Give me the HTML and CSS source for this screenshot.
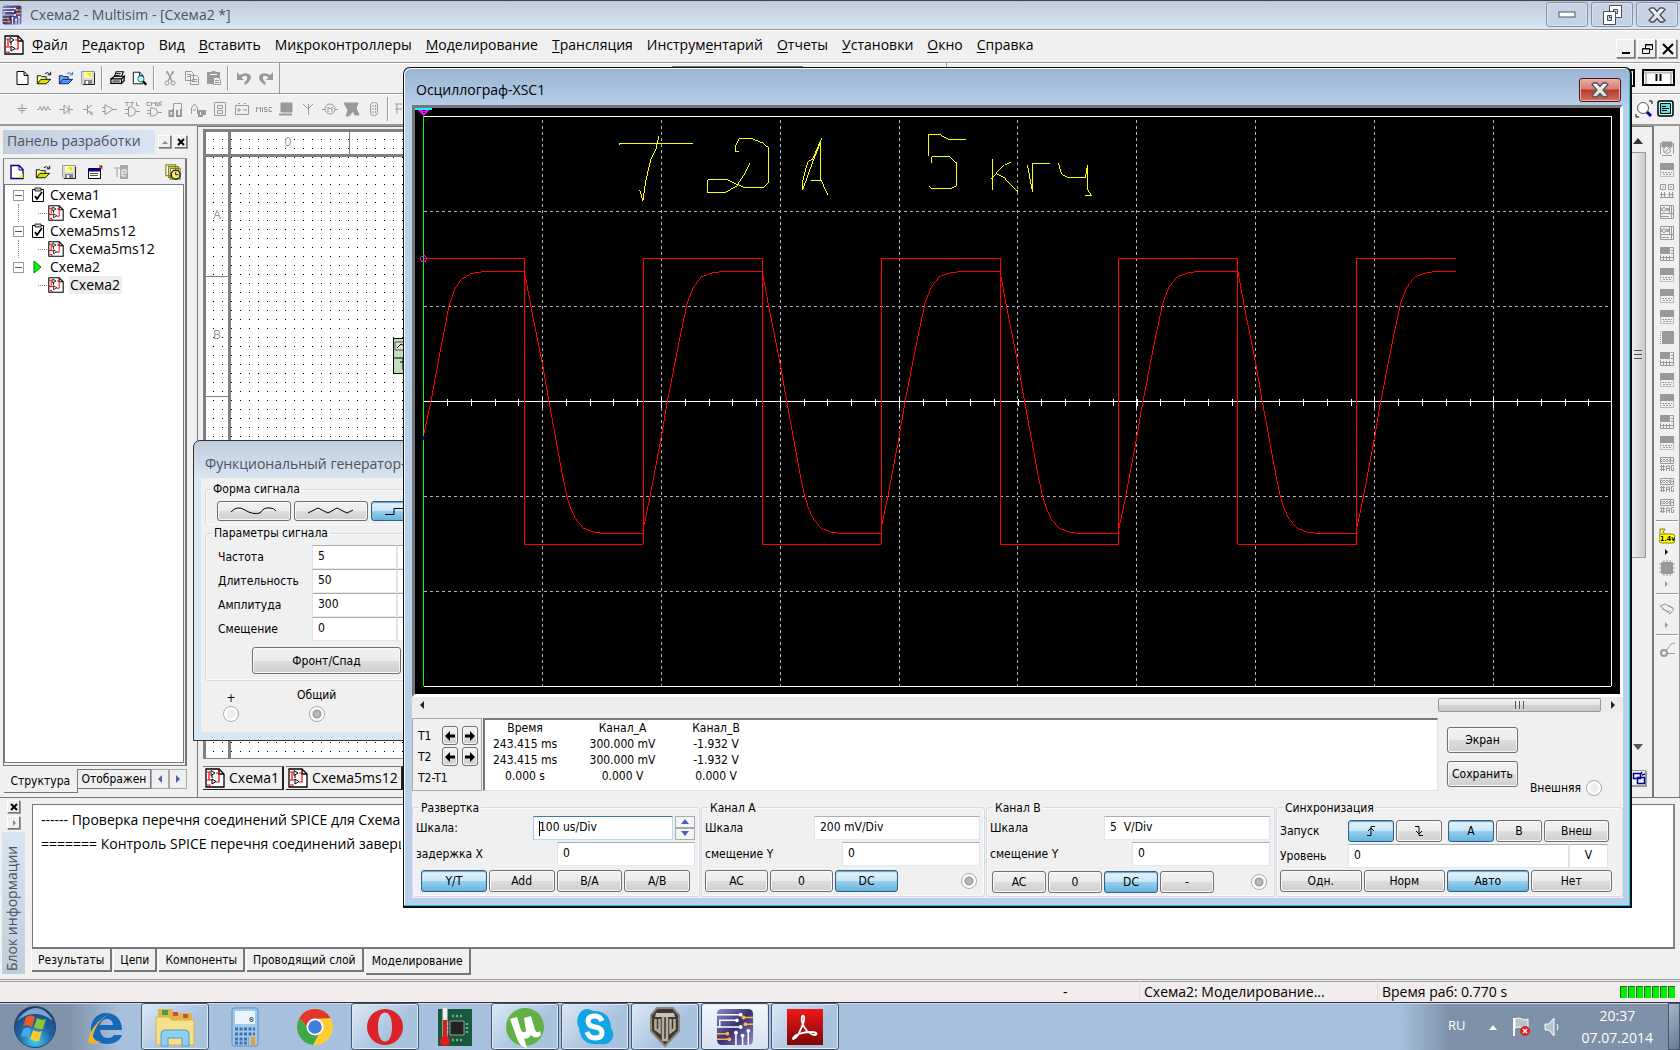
FILE: index.html
```html
<!DOCTYPE html>
<html lang="ru">
<head>
<meta charset="utf-8">
<title>Схема2 - Multisim - [Схема2 *]</title>
<link rel="stylesheet" href="styles.css">
</head>
<body>
<svg class="defs" aria-hidden="true">
  <defs>
    <linearGradient id="g-page" x1="0" y1="0" x2="1" y2="1"><stop offset="0" stop-color="#8d8bc8"/><stop offset=".5" stop-color="#3b2f78"/><stop offset="1" stop-color="#8d8bc8"/></linearGradient>
    <linearGradient id="g-x" x1="0" y1="0" x2="0" y2="1"><stop offset="0" stop-color="#fff"/><stop offset="1" stop-color="#d4d4d4"/></linearGradient>
  </defs>
  <symbol id="i-sch" viewBox="0 0 20 20"><path d="M1 1h13l5 5v13H1z" fill="#fff" stroke="#000" stroke-width="1.300"/><path d="M14 1v5h5" fill="none" stroke="#000" stroke-width="1.300"/><path d="M1 4h4M4 4v8M1 12h6M11 5h3v9h-3M2 17h3v2" fill="none" stroke="#e00" stroke-width="1.200"/><path d="M6 2.500v5l4-2.500zM7 11v5l4-2.500zM7 7v3" fill="#fff" stroke="#000"/></symbol>
  <symbol id="i-app" viewBox="0 0 40 40"><rect x="1" y="1" width="38" height="38" rx="5" fill="url(#g-page)"/><path d="M1 7h25M4 20v-7h18M1 20h25" fill="none" stroke="#fff" stroke-width="1.600"/><path d="M39 10H29M39 17H31M1 27h11M1 33h13" stroke="#ffb732" stroke-width="1.600"/><path d="M21 39V26M28 39V29M34 39V24" stroke="#fff" stroke-width="1.600"/><g fill="#fff"><circle cx="26" cy="7" r="2"/><circle cx="22" cy="13" r="2"/><circle cx="26" cy="20" r="2"/><circle cx="21" cy="26" r="2"/><circle cx="28" cy="29" r="2"/><circle cx="34" cy="24" r="2"/></g><g fill="#ffb732"><circle cx="29" cy="10" r="2"/><circle cx="31" cy="17" r="2"/><circle cx="12" cy="27" r="2"/><circle cx="14" cy="33" r="2"/></g></symbol>
  <symbol id="i-x" viewBox="0 0 18 16"><path d="M1 2.500 3 1h3l3 3.500L12 1h3l2 1.500L12 8l5 5.500-2 1.500h-3l-3-3.500L6 15H3l-2-1.500L6 8z" fill="url(#g-x)" stroke="#4b4f63" stroke-width="1.300"/></symbol>
  <symbol id="i-new" viewBox="0 0 16 16"><path d="M3 1.500h7l4 4v9H3zM10 1.500v4h4" fill="#fff" stroke="#000"/></symbol>
  <symbol id="i-newy" viewBox="0 0 16 16"><path d="M2 1.500h8l4 4v9H2z" fill="#fff" stroke="#008" stroke-width="1.400"/><path d="M9 14l5-5v5z" fill="#ee0"/><path d="M10 2v4h4" fill="none" stroke="#008"/></symbol>
  <symbol id="i-open" viewBox="0 0 18 16"><path d="M1.500 14.500v-9h4l1 1h5v3" fill="#ff9" stroke="#000"/><path d="M1.500 14.500l4-5h11l-5 5z" fill="#dd0" stroke="#000"/><path d="M10 3q3-2.500 6 1M16.500 1v3.500H13" fill="none" stroke="#000"/></symbol>
  <symbol id="i-openb" viewBox="0 0 18 16"><path d="M1.500 14.500v-9h4l1 1h5v3" fill="#6ab0f0" stroke="#015"/><path d="M1.500 14.500l4-5h11l-5 5z" fill="#4d94ff" stroke="#015"/><path d="M10 3q3-2.500 6 1M16.500 1v3.500H13" fill="none" stroke="#26c"/></symbol>
  <symbol id="i-save" viewBox="0 0 16 16"><path d="M1.500 1.500h13v13h-12l-1-1z" fill="#d8d8d8" stroke="#999"/><path d="M4 2h8v6H4z" fill="#ffffb0"/><path d="M5 3h2v2h2v2h2V3z" fill="#ee0"/><path d="M4 10h8v5H4z" fill="#888"/><path d="M6 11h2v4H6z" fill="#fff"/><path d="M14.500 3v11.500H3" fill="none" stroke="#222"/></symbol>
  <symbol id="i-print" viewBox="0 0 18 16"><path d="M5 6l2-5h8l-2 5z" fill="#fff" stroke="#000" stroke-width="1.300"/><path d="M1 9l4-3h11l-3 3zM1 9h12v5H1zM13 9l3-3v5l-3 3z" fill="#ddd" stroke="#000" stroke-width="1.300"/><path d="M3 11.500h8M7 3h5M6 5h5" stroke="#000"/></symbol>
  <symbol id="i-prev" viewBox="0 0 18 16"><path d="M1.500 1.500h7l4 4v9h-11zM8.500 1.500v4h4" fill="#fff" stroke="#000"/><circle cx="10" cy="9" r="3.500" fill="#bff" stroke="#066"/><path d="M12.500 11.500l3.500 4" stroke="#000" stroke-width="2.500"/></symbol>
  <symbol id="i-cut" viewBox="0 0 16 16"><g fill="none" stroke="#999"><path d="M5 1l5 10M11 1L6 11M5 1v3M11 1v3" stroke-width="1.400"/><circle cx="5" cy="13" r="2"/><circle cx="11" cy="13" r="2"/></g></symbol>
  <symbol id="i-copy" viewBox="0 0 16 16"><g fill="#efefef" stroke="#999"><path d="M1.500 1.500h6l2 2v7h-8zM6.500 5.500h6l2 2v7h-8z"/><path d="M3 4.500h4M3 6.500h3M8 9.500h5M8 11.500h5"/></g></symbol>
  <symbol id="i-paste" viewBox="0 0 16 16"><path d="M1 2h4l1-1h3l1 1h4v12H1z" fill="#999"/><path d="M7.500 7.500h5l2 2v5h-7z" fill="#efefef" stroke="#999"/><path d="M4 4.500h7" stroke="#fff"/><path d="M9 10.500h4M9 12.500h4" stroke="#999"/></symbol>
  <symbol id="i-undo" viewBox="0 0 16 16"><path d="M1 2v8h7L5.500 7.500Q8 5 10.500 6q2 3-2.500 7l1 2q6-3 6-9Q12 1 3.500 5z" fill="#999"/></symbol>
  <symbol id="i-box" viewBox="0 0 16 16"><path d="M1.500 4.500h12v10h-12z" fill="#fff" stroke="#000"/><path d="M2 6h11" stroke="#008" stroke-width="3"/><path d="M3 9.500h8M3 11.500h8" stroke="#555"/><path d="M15 5V2h-3M15 2l-4 3" stroke="#a00" fill="none"/></symbol>
  <symbol id="i-te" viewBox="0 0 16 16"><path d="M1 4h6M4 4v9" stroke="#bbb" stroke-width="1.500"/><path d="M7 1h8v14H7z" fill="#aaa"/><path d="M9 9h4V6H9v6h4" fill="none" stroke="#fff"/></symbol>
  <symbol id="i-hist" viewBox="0 0 18 18"><g fill="#fff" stroke="#880" stroke-width="1.300"><path d="M1 1h11v12H1zM4 3h11v12H4zM6 5h11v12H6z"/></g><circle cx="12" cy="12" r="5" fill="#fe3" stroke="#008" stroke-width="1.400"/><path d="M12 9v3h3" fill="none" stroke="#008"/></symbol>
  <symbol id="i-chk" viewBox="0 0 14 16"><path d="M1.500 2.500h11v12h-11z" fill="#fff" stroke="#000"/><path d="M4 1h6v3H4z" fill="#ccc" stroke="#000" stroke-width=".8"/><path d="M4 9l2 3 5-7" fill="none" stroke="#000" stroke-width="1.800"/></symbol>
  <symbol id="i-flagx" viewBox="0 0 20 22"><path d="M3 2v18" stroke="#fff" stroke-width="2"/><path d="M4 3q4-2 7 0t6 0v9q-3 2-6 0t-7 0z" fill="#b9c3d0" stroke="#fff"/><circle cx="14" cy="15" r="5" fill="#d22"/><path d="M12 13l4 4M16 13l-4 4" stroke="#fff" stroke-width="1.500"/></symbol>
  <symbol id="n-scope" viewBox="0 0 16 16"><path d="M1.500 2v11M14.500 2v11M3 1h10v5H3z" fill="#999" stroke="#999"/><circle cx="8" cy="9" r="3.500" fill="#efefef" stroke="#999"/><path d="M3 14.500h10M6 11l4-4" stroke="#999"/></symbol>
  <symbol id="n-a" viewBox="0 0 16 16"><path d="M1 1h14v7H1z" fill="#999"/><path d="M1.500 8v6.500h13V8" fill="none" stroke="#bbb"/><path d="M3 10.500h10M4 12.500h9" stroke="#999" stroke-dasharray="2 1"/></symbol>
  <symbol id="n-b" viewBox="0 0 16 16"><path d="M1.500 1.500h5v5h-5zM9.500 1.500h5v5h-5z" fill="none" stroke="#999"/><path d="M3 5l2-2M11 5l2-2" stroke="#999"/><path d="M1 11.500h6M9 11.500h6M1 14.500h14M2.500 9v5M5.500 9v5M10.500 9v5M13.500 9v5" stroke="#999"/></symbol>
  <symbol id="n-c" viewBox="0 0 16 16"><path d="M1.500 1.500h13v13h-13zM10.500 1v9M1 9.500h14M12.500 1v13" fill="none" stroke="#999"/><path d="M2 7l3-4 3 4 2-3M2 4l3 4 3-4 2 3M2 12.500h8" fill="none" stroke="#999"/></symbol>
  <symbol id="n-d" viewBox="0 0 16 16"><path d="M1 1h10v7H1z" fill="#999"/><path d="M11.500 1.500h3v13h-13V9M12 4.500h3M12 7.500h3M2 11.500h12M4.500 10v4M7.500 10v4M10.500 10v4" fill="none" stroke="#999"/></symbol>
  <symbol id="n-e" viewBox="0 0 16 16"><path d="M3 1h12v13H3z" fill="#999"/><path d="M1.500 1v14" stroke="#999" stroke-dasharray="1 1"/></symbol>
  <symbol id="n-ag" viewBox="0 0 16 16"><path d="M1.500 1.500h13v6h-13zM11.500 1v6M11 4.500h4" fill="none" stroke="#999"/><path d="M2 6l3-3 3 3 3-3M2 3l3 3 3-3 3 3" fill="none" stroke="#999"/><path d="M1 10.500h5M1 13.500h5M2.500 9v6M4.500 9v6M7.500 15v-5h3v5M7.500 12.500h3M15 9.500h-2.500v5h2v-3" fill="none" stroke="#999"/></symbol>
</svg>

<header class="titlebar">
  <svg class="ic20"><use href="#i-app"/></svg>
  <h1>Схема2 - Multisim - [Схема2 *]</h1>
  <div class="winbtns">
    <button aria-label="Свернуть"><svg width="18" height="8"><rect x="1" y="1" width="16" height="5" fill="#fff" stroke="#4b4f63"/></svg></button>
    <button aria-label="Восстановить"><svg width="22" height="22"><g fill="#fff" stroke="#4b4f63"><path fill-rule="evenodd" d="M8.500 1.500h12v12h-12zm4 4v4h4v-4z"/><path fill-rule="evenodd" d="M2.500 7.500h12v13h-12zm4 4v5h4v-5z"/></g></svg></button>
    <button aria-label="Закрыть"><svg width="18" height="16"><use href="#i-x"/></svg></button>
  </div>
</header>

<nav class="menubar">
  <svg class="ic20"><use href="#i-sch"/></svg>
  <a href="#"><u>Ф</u>айл</a><a href="#"><u>Р</u>едактор</a><a href="#">Вид</a><a href="#"><u>В</u>ставить</a><a href="#">Ми<u>к</u>роконтроллеры</a><a href="#"><u>М</u>оделирование</a><a href="#"><u>Т</u>рансляция</a><a href="#">Инструм<u>е</u>нтарий</a><a href="#"><u>О</u>тчеты</a><a href="#"><u>У</u>становки</a><a href="#"><u>О</u>кно</a><a href="#"><u>С</u>правка</a>
  <div class="mdi">
    <button aria-label="Свернуть окно"><svg width="14" height="14"><path d="M3 11h8" stroke="#000" stroke-width="2"/></svg></button>
    <button aria-label="Восстановить окно"><svg width="14" height="14"><path d="M5.500 6V2.500h7v5H9M5 3h8M2.500 6.500h7v5h-7zM2 7h8" fill="none" stroke="#000"/></svg></button>
    <button aria-label="Закрыть окно"><svg width="14" height="14"><path d="M2 2l10 10M12 2L2 12" stroke="#000" stroke-width="2"/></svg></button>
  </div>
</nav>

<div class="bar bar-main">
  <div class="tools std">
    <svg class="ic"><use href="#i-new"/></svg><svg class="ic"><use href="#i-open"/></svg><svg class="ic"><use href="#i-openb"/></svg><svg class="ic"><use href="#i-save"/></svg><i></i>
    <svg class="ic"><use href="#i-print"/></svg><svg class="ic"><use href="#i-prev"/></svg><i></i>
    <svg class="ic"><use href="#i-cut"/></svg><svg class="ic"><use href="#i-copy"/></svg><svg class="ic"><use href="#i-paste"/></svg><i></i>
    <svg class="ic"><use href="#i-undo"/></svg><svg class="ic flip"><use href="#i-undo"/></svg>
  </div>
  <div class="tools mid"></div>
  <div class="tools sim"><svg width="48" height="18"><path d="M0 1h6v16H0" fill="#fff" stroke="#000" stroke-width="2"/><path d="M2 4v10" stroke="#000" stroke-width="2"/><rect x="15" y="1" width="31" height="15" fill="#fff" stroke="#000" stroke-width="2"/><path d="M16 3.500h29M18 3v12M43 3v12" stroke="#bbb" stroke-width="2"/><path d="M28.500 5v7M32.500 5v7" stroke="#000" stroke-width="2"/></svg></div>
</div>

<div class="bar bar-parts">
  <div class="tools parts">
    <svg class="ic g"><path d="M3 7.500h10M5 9.500h6M8 3v4M8 10v3"/></svg>
    <svg class="ic g"><path d="M1 8.500h2l1-3 2 4 2-4 2 4 2-4 1 3h2"/></svg>
    <svg class="ic g"><path d="M1 8.500h5M6 4v9l5-4.500zM11 4v9M11 8.500h4"/></svg>
    <svg class="ic g"><path d="M3 8.500h4M7.500 4v9M8 7l4-3M8 10l4 4M9 11h3v3"/></svg>
    <svg class="ic g"><path d="M3 3.500v10l8-5zM0 6.500h3M0 10.500h3M11 8.500h4"/></svg>
    <svg class="ic g"><path d="M1 1.500h4M3 1v4M6 1.500h4M8 1v4M12.500 1v3.500H15M4.500 6v9h3q4-1 4-4.500T7.500 6zM1 8.500h3M1 12.500h3M12 10.500h4"/></svg>
    <svg class="ic g"><path d="M4 1.500H1v3h3M5.500 5V1l2 2 2-2v4M11 1v4h2V1M16 1h-2v3h2M4.500 7v8h3q4-1 4-4T7.500 7zM1 9.500h3M1 12.500h3M12 11.500h4"/></svg>
    <svg class="ic g"><path d="M5.500 13V2.500h8V8" stroke-width="1"/><path d="M5 8v7H1.500V10H5M13 8v7H9V9" stroke-width="2"/></svg>
    <svg class="ic g"><path d="M1.500 13V7l3-4 3 4v6M3 9h3"/><path d="M9 10h3v5H9zM14 9v4h2V9" stroke-width="2"/></svg>
    <svg class="ic g"><path d="M2.500 1.500h11v13h-11zM5.500 4.500h5v3h-5zM5.500 9.500h5v3h-5z"/></svg>
    <svg class="ic g"><path d="M1.500 4.500h13v9h-13zM4 2.500h2M10 2.500h2M3 9h4M5 7v4M9 9h4"/></svg>
    <svg class="ic g"><path d="M.5 11V6l2 2 2-2v5M6.500 6v5M11 6.500H8.500v2H11v2H8M16 6.500h-3v4h3"/></svg>
    <svg class="ic g"><path d="M3 2h11v9H3z" fill="#999"/><path d="M1 13.500h13" stroke-width="2"/></svg>
    <svg class="ic g"><path d="M3 3l5 5 5-5M8.500 3v11"/></svg>
    <svg class="ic g"><circle cx="8" cy="8" r="5"/><path d="M0 8.500h3M13 8.500h3M6 11V6l2 2 2-2v5"/></svg>
    <svg class="ic g"><path d="M0 2h14l-2 5 3 7h-4l-2-4-4 5H2l2-6z" fill="#999"/></svg>
    <svg class="ic g"><rect x="4.500" y="1.500" width="7" height="13" rx="3"/><path d="M7 4v8M9.500 4v8" stroke-dasharray="2 1"/></svg>
    <i></i><svg class="ic g"><path d="M1 3h7M3 3v10M1 8h7"/></svg>
  </div>
  <div class="tools zoom">
    <svg class="ic18" viewBox="0 0 18 18"><circle cx="8" cy="8" r="5.500" fill="#fff" stroke="#555"/><path d="M12 12l4 4" stroke="#008" stroke-width="3"/><path d="M14 1h3v3M1 14v3h3" fill="none" stroke="#000"/></svg>
    <svg class="ic18" viewBox="0 0 18 18"><rect x="1" y="1" width="15" height="15" rx="2" fill="#bff" stroke="#000" stroke-width="1.500"/><path d="M3.500 3.500h10v10h-10z" fill="#6dd" stroke="#000"/><path d="M5 6.500h4M5 8.500h7M5 10.500h5" stroke="#000"/></svg>
  </div>
</div>

<main class="work">
  <aside class="dev">
    <div class="dev-head"><h2>Панель разработки</h2>
      <button class="mini" aria-label="Свернуть панель"><svg width="10" height="10"><path d="M2 7h6L5 4z" fill="#888"/></svg></button>
      <button class="mini" aria-label="Закрыть панель"><svg width="10" height="10"><path d="M2 2l6 6M8 2L2 8" stroke="#000" stroke-width="2"/></svg></button></div>
    <div class="dev-box">
      <div class="dev-tools"><svg class="ic"><use href="#i-newy"/></svg><svg class="ic"><use href="#i-open"/></svg><svg class="ic"><use href="#i-save"/></svg><svg class="ic"><use href="#i-box"/></svg><svg class="ic"><use href="#i-te"/></svg><svg class="ic last"><use href="#i-hist"/></svg></div>
      <ul class="tree">
        <li><span class="exp"></span><svg class="st"><use href="#i-chk"/></svg>Схема1</li>
        <li class="kid"><span class="stem"></span><span class="elbow"></span><svg class="ic"><use href="#i-sch"/></svg>Схема1</li>
        <li><span class="exp"></span><svg class="st"><use href="#i-chk"/></svg>Схема5ms12</li>
        <li class="kid"><span class="stem"></span><span class="elbow"></span><svg class="ic"><use href="#i-sch"/></svg>Схема5ms12</li>
        <li><span class="exp"></span><svg class="st" viewBox="0 0 14 16"><path d="M3 2v12l7-6z" fill="#0f0" stroke="#070"/></svg>Схема2</li>
        <li class="kid end"><span class="stem"></span><span class="elbow"></span><svg class="ic"><use href="#i-sch"/></svg><b>Схема2</b></li>
      </ul>
    </div>
    <div class="dev-tabs"><button class="on">Структура</button><button>Отображен</button><button class="arr" aria-label="Влево"><svg width="8" height="10"><path d="M6 1v8L2 5z" fill="#4a62b5"/></svg></button><button class="arr" aria-label="Вправо"><svg width="8" height="10"><path d="M2 1v8l4-4z" fill="#4a62b5"/></svg></button></div>
  </aside>
  <section class="doc">
    <div class="sheetrow">
      <div class="sheet">
        <div class="corner"></div><div class="cols"><span>0</span></div>
        <div class="rows"><span>A</span><span>B</span></div>
        <div class="field"><svg class="part" width="14" height="36"><rect x=".5" y=".5" width="20" height="35" fill="#bfe0bf" stroke="#000"/><path d="M2 4h12v8H2z" fill="#ddd" stroke="#555"/><path d="M4 10l4-4 6 4M1 20h12M7 24h8M10 20v12" fill="none" stroke="#000"/></svg></div>
      </div>
      <div class="vscroll"><svg width="12" height="8"><path d="M1 7h10L6 1z" fill="#333"/></svg><div class="vthumb"><span></span></div><svg width="12" height="8"><path d="M1 1h10L6 7z" fill="#555"/></svg></div>
    </div>
    <div class="doctabs"><button><svg class="ic20"><use href="#i-sch"/></svg>Схема1</button><button><svg class="ic20"><use href="#i-sch"/></svg>Схема5ms12</button><button class="cas" aria-label="Окна"><svg width="14" height="14"><path d="M1.500 2.500h7v5h-7zM5.500 6.500h7v6h-7zM10 1l-2 3M13 3l-3 1" fill="none" stroke="#009" stroke-width="1.500"/></svg></button></div>
  </section>
  <aside class="instr">
    <svg class="ic"><use href="#n-scope"/></svg><svg class="ic"><use href="#n-a"/></svg><svg class="ic"><use href="#n-b"/></svg><svg class="ic"><use href="#n-c"/></svg><svg class="ic"><use href="#n-c"/></svg><svg class="ic"><use href="#n-d"/></svg><svg class="ic"><use href="#n-a"/></svg><svg class="ic"><use href="#n-a"/></svg><svg class="ic"><use href="#n-a"/></svg><svg class="ic"><use href="#n-e"/></svg><svg class="ic"><use href="#n-d"/></svg><svg class="ic"><use href="#n-a"/></svg><svg class="ic"><use href="#n-a"/></svg><svg class="ic"><use href="#n-d"/></svg><svg class="ic"><use href="#n-a"/></svg><svg class="ic"><use href="#n-ag"/></svg><svg class="ic"><use href="#n-ag"/></svg><svg class="ic"><use href="#n-ag"/></svg>
    <i></i>
    <svg class="ic" viewBox="0 0 16 16"><path d="M1 1h5L4 4l3 3M1 1v5" fill="#ff0" stroke="#880"/><rect x="0" y="6" width="16" height="9" rx="3" fill="#ff0" stroke="#880"/><text x="1" y="13" font-size="7" font-weight="bold" font-family="DejaVu Sans Condensed, sans-serif">1.4v</text></svg>
    <svg class="tri"><path d="M1 0v6l3-3z" fill="#000"/></svg>
    <svg class="ic g"><path d="M2.500 2.500h11v11h-11z" fill="#999"/><path d="M0 4h16M0 8h16M0 12h16M5 0v16M8 0v16M11 0v16" stroke-dasharray="2 12"/></svg>
    <svg class="tri"><path d="M1 0v6l3-3z" fill="#999"/></svg><i></i>
    <svg class="ic g"><path d="M1 5l5-2 9 5-4 5zM3 8l8 3M9 4l5 3"/></svg>
    <svg class="tri"><path d="M1 0v6l3-3z" fill="#999"/></svg><i></i>
    <svg class="ic g"><circle cx="5" cy="11" r="3" stroke-width="2"/><path d="M7 9l5-7 4-1M8 11.500h8"/></svg>
  </aside>
</main>

<section class="info">
  <div class="info-side">
    <button class="mini" aria-label="Закрыть блок"><svg width="10" height="10"><path d="M2 2l6 6M8 2L2 8" stroke="#000" stroke-width="2"/></svg></button>
    <button class="mini" aria-label="Развернуть блок"><svg width="10" height="10"><path d="M4 2v6l3-3z" fill="#888"/></svg></button>
    <h2>Блок информации</h2>
  </div>
  <div class="info-main">
    <div class="log"><p>------ <span>Проверка перечня соединений SPICE для Схема2</span></p><p>======= <span>Контроль SPICE перечня соединений завершен</span></p></div>
    <div class="info-tabs"><button>Результаты</button><button>Цепи</button><button>Компоненты</button><button>Проводящий слой</button><button class="on">Моделирование</button></div>
  </div>
</section>

<footer class="status"><span class="s-dash">-</span><span class="s-sim">Схема2: Моделирование...</span><span class="s-time">Время раб: 0.770 s</span><span class="s-run"><b></b><b></b><b></b><b></b><b></b><b></b><b></b></span></footer>

<section class="taskbar">
  <button class="plain" aria-label="Пуск"><svg width="44" height="44" viewBox="0 0 44 44"><defs><radialGradient id="g-orb" cx=".5" cy=".85" r=".8"><stop offset="0" stop-color="#3fd0f5"/><stop offset=".5" stop-color="#1d68a8"/><stop offset="1" stop-color="#1c3f70"/></radialGradient></defs><circle cx="22" cy="22" r="20.500" fill="url(#g-orb)" stroke="#24466e"/><path d="M4 16q18-14 36 0Q32 2 22 3T4 16z" fill="#7fa5cb"/><path d="M13 12q5-3 9 0l-3 10q-4-3-9-1z" fill="#ee5a24"/><path d="M24 13q5 3 9 1l-3 10q-5 1-9-2z" fill="#8cc63e"/><path d="M10 24q4-3 8 0l-2 9q-4-3-8-1z" fill="#4aa8e8"/><path d="M20 25q5 3 9 1l-3 10q-4 1-9-2z" fill="#fdc82f"/></svg></button>
  <button class="plain" aria-label="Internet Explorer"><svg width="44" height="44" viewBox="0 0 44 44"><path fill-rule="evenodd" d="M23 8c9 0 16 6 16 17H17c1 5 3 8 8 8 3 0 5-1 6-3h8c-2 6-8 9-15 9-9 0-16-6-16-15S14 8 23 8zm-6 12h13c0-4-3-6-6-6s-6 2-7 6z" fill="#1669b8"/><path d="M37 8q-3-5-16 4T5 36q2 6 13 0-9 1-8-6Q14 15 28 8q7-3 9 0z" fill="#f3b229"/></svg></button>
  <button class="task" aria-label="Проводник"><svg width="44" height="44" viewBox="0 0 44 44"><path d="M5 4h14l2 4h18v10H5z" fill="#d9b74a"/><path d="M9 5h6v5H9z" fill="#4a9a4a"/><path d="M20 7h5v4h-5zM30 9h5v4h-5z" fill="#d44"/><path d="M3 12h13l3 3h22v25H3z" fill="#f5e08b" stroke="#d3b04f"/><path d="M8 41V29q0-4 4-4h20q4 0 4 4v12h-7v-8H15v8z" fill="#8fd0ee" stroke="#4f9cc8"/></svg></button>
  <button class="plain" aria-label="Калькулятор"><svg width="44" height="44" viewBox="0 0 44 44"><rect x="9" y="3" width="26" height="38" rx="2" fill="#9ec8ec" stroke="#5d8fc0"/><rect x="12" y="6" width="20" height="13" fill="#e9f3fc"/><text x="26" y="17" font-size="8" font-family="Liberation Mono, monospace">0</text><path d="M12 24h20M12 29h20M12 34h14M12 38h14" stroke="#4072a8" stroke-width="3" stroke-dasharray="3 1.500"/><path d="M28 32h4v8h-4z" fill="#f39a2b"/></svg></button>
  <button class="plain" aria-label="Chrome"><svg width="44" height="44" viewBox="0 0 44 44"><circle cx="22" cy="22" r="18" fill="#fc3"/><path d="M6.400 13A18 18 0 0 1 37.600 13L22 14q-7 0-8 8z" fill="#e2382c"/><path d="M6.400 13A18 18 0 0 0 20 40l7-13q-9 4-13-5z" fill="#3da94a"/><circle cx="22" cy="22" r="8.500" fill="#fff"/><circle cx="22" cy="22" r="6.800" fill="#3f7fd8"/></svg></button>
  <button class="task" aria-label="Opera"><svg width="44" height="44" viewBox="0 0 44 44"><path fill-rule="evenodd" d="M22 4c10 0 18 8 18 18s-8 18-18 18S4 32 4 22 12 4 22 4zm0 3.500c-5 0-7 7-7 14.500s2 14.500 7 14.500 7-7 7-14.500S27 7.500 22 7.500z" fill="#dc2329"/></svg></button>
  <button class="plain" aria-label="Монитор температуры"><svg width="44" height="44" viewBox="0 0 44 44"><path d="M5 4h34v37H5z" fill="#155a3e"/><path d="M17 16h14v14H17z" fill="#222" stroke="#999"/><path d="M19 11h12M19 35h12M14 18v11M34 18v11" stroke="#7fa98a" stroke-width="2.500" stroke-dasharray="2 2"/><path d="M12 5v26" stroke="#eee" stroke-width="5" stroke-linecap="round"/><path d="M12 15v20" stroke="#e01b1b" stroke-width="4"/><circle cx="12" cy="36" r="5" fill="#e01b1b"/></svg></button>
  <button class="task" aria-label="uTorrent"><svg width="44" height="44" viewBox="0 0 44 44"><circle cx="22" cy="22" r="19" fill="#62b146"/><path d="M7 14l7-2 4 13q2 4 5 1l-2-13 7-2 4 14q2 4 5 1l1 4q-5 5-10 0-3 5-7 3l3 10q-6-1-9-7z" fill="#fff"/></svg></button>
  <button class="task" aria-label="Skype"><svg width="44" height="44" viewBox="0 0 44 44"><path d="M13 4q4 0 7 2 17-1 18 17 3 4 2 9-3 9-14 7Q8 41 6 23q-3-6-1-11 2-7 8-8z" fill="#12a5e4"/><path d="M29 16q-2-5-7-5-7 0-7 5t7 6q7 1 7 6t-7 5q-6 0-8-6" fill="none" stroke="#fff" stroke-width="5"/></svg></button>
  <button class="task" aria-label="World of Tanks"><svg width="44" height="44" viewBox="0 0 44 44"><path d="M14 3h16l6 7v16L22 41 8 26V10z" fill="#3c3833" stroke="#8c8678" stroke-width="2"/><path d="M13 8h18l1 4H12z" fill="#c9c3b5"/><path d="M12.500 14v10l4 3V14M20 12v23h4V12M27.500 14v13l4-3V14" fill="none" stroke="#b5ae9d" stroke-width="2.500"/></svg></button>
  <button class="task cur" aria-label="Multisim"><svg width="40" height="38"><use href="#i-app"/></svg></button>
  <button class="task" aria-label="Adobe Reader"><svg width="44" height="44" viewBox="0 0 44 44"><defs><linearGradient id="g-pdf" x1="0" y1="0" x2="0" y2="1"><stop offset="0" stop-color="#f01818"/><stop offset="1" stop-color="#7d0505"/></linearGradient></defs><path d="M4 4h36v36H4z" fill="url(#g-pdf)"/><path d="M11 32c-3 3 1 3 4-2 4-8 7-14 6-18-1-3-3-1-2 5 2 7 7 12 12 13 4 0 3-3-2-3-8 0-16 2-18 5z" fill="none" stroke="#fff" stroke-width="1.800"/></svg></button>
  <div class="tray"><span class="lang">RU</span><svg width="12" height="8"><path d="M2 7h8L6 2z" fill="#fff"/></svg><svg width="20" height="22"><use href="#i-flagx"/></svg><svg class="snd" width="20" height="22"><path d="M2 8h4l5-6v18l-5-6H2z" fill="#b8c3d0" stroke="#fff"/><path d="M14 8q2 3 0 6" fill="none" stroke="#fff"/></svg><time>20:37<br>07.07.2014</time><span class="peek"></span></div>
</section>

<section class="win gen">
  <h2>Функциональный генератор-XFG1</h2>
  <div class="gen-body">
    <fieldset class="wave"><legend>Форма сигнала</legend>
      <button class="btn" aria-label="Синус"><svg width="48" height="10"><path d="M1 6Q7-1 15 4t15 3q4-6 10-5 4 0 6 3" fill="none" stroke="#000"/></svg></button><button class="btn" aria-label="Треугольник"><svg width="48" height="10"><path d="M1 7l10-5 10 5 9-5 10 5 6-3" fill="none" stroke="#000"/></svg></button><button class="btn on" aria-label="Меандр"><svg width="48" height="10"><path d="M1 8.500h9v-6h18v6h10" fill="none" stroke="#000"/></svg></button></fieldset>
    <fieldset class="params"><legend>Параметры сигнала</legend>
      <label for="f1">Частота</label><input id="f1" value="5"><input aria-label="Единица частоты" value="kHz">
      <label for="f2">Длительность</label><input id="f2" value="50"><input aria-label="Единица длительности" value="%">
      <label for="f3">Амплитуда</label><input id="f3" value="300"><input aria-label="Единица амплитуды" value="mVp">
      <label for="f4">Смещение</label><input id="f4" value="0"><input aria-label="Единица смещения" value="V">
      <button class="btn">Фронт/Спад</button></fieldset>
    <div class="terms"><label>+<input type="radio" name="gt"></label><label>Общий<input type="radio" name="gc" checked></label></div>
  </div>
</section>

<section class="win scope">
  <div class="scope-title"><h2>Осциллограф-XSC1</h2><button aria-label="Закрыть осциллограф"><svg width="18" height="16"><use href="#i-x"/></svg></button></div>
  <div class="scope-body">
    <div class="screen">
      <svg viewBox="415 108 1206 586" shape-rendering="crispEdges" fill="none">
        <g stroke="#b4b4b4" stroke-dasharray="3 3"><path d="M424 211.500h1188M424 306.500h1188M424 496.500h1188M424 591.500h1188"/><path d="M542.500 120v566M661.500 120v566M780.500 120v566M899.500 120v566M1018.500 120v566M1137.500 120v566M1256.500 120v566M1375.500 120v566M1494.500 120v566"/></g>
        <path d="M424 116.500h1188.500v570H424M424 401.500h1188" stroke="#fff"/>
        <path d="M447 402.500H1612" stroke="#fff" stroke-width="7" stroke-dasharray="1 22.800"/>
        <path d="M542 402.500H1612" stroke="#fff" stroke-width="12" stroke-dasharray="1 118"/>
        <g stroke="#f00">
          <path d="M424 258.500h100.500v286h119v-286h119v286h119v-286h119v286h119v-286h119v286h119v-286H1457"/>
          <path d="M423.500 436L431 401.500 440 352.500 449 306.500 454.500 290 461 280 471.500 273.500 485.500 271.500h39L531 306.500 542.500 364 549 401.500 562.500 475 567 496.500 570.500 507.500 575.500 519 583.500 528.500 594 532.500 601.500 533.500h42"/>
          <path id="w1" d="M643.500 529L650 498 661.500 437 667.500 401.500 681 333.500 687.500 303 693.500 287.500 701.500 277 713 273 723.500 271.500h39L769 306.500 780.500 364 787 401.500 800.500 475 805 496.500 808.500 507.500 813.500 519 821.500 528.500 832 532.500 839.500 533.500h42"/>
          <use href="#w1" x="238"/><use href="#w1" x="476"/>
          <path d="M1357.500 529L1364 498 1375.500 437 1381.500 401.500 1395 333.500 1401.500 303 1407.500 287.500 1415.500 277 1427 273 1437.500 271.500H1457"/>
        </g>
        <path d="M423.500 116v570" stroke="#0f0"/><path d="M423.500 436v4" stroke="#00f"/>
        <path d="M415 108h17l-9 8z" fill="#f0f"/><path d="M415 109h17" stroke="#0ff" stroke-width="2"/><path d="M423.500 110v4" stroke="#000" stroke-width="2" stroke-dasharray="1 1"/>
        <circle cx="423.500" cy="259" r="3" stroke="#f0f"/>
        <g stroke="#ff0"><path d="M619.500 145v-1.500h74M659 136l-3 14-5 9-5 22-3 20-3-11"/><path d="M739 152h-3v-6l3-7h14l10 4 6 5v34l-6 6h-18l-17-8h-20v13h17l12-7 9-14 4-9"/><path d="M822 138l-6 14-3 7-5 3-5 19v9l10-28 8-20v39h-10M821 179l3 7 4 9"/><path d="M966 139.500h-17l-9-5h-11v22M932 163v-6h18l7 6v23l-6 3h-18l-4-3"/><path d="M992.500 159v31M1011 162l-6 3-8 8-5 6M997 174l8 4 13 14v-2M1028 165l5 27v-28h18M1059 163l3 11 7 4h17l2-13v24l4 7h-6"/></g>
      </svg>
    </div>
    <div class="hscroll"><svg width="8" height="10"><path d="M6 1v8L2 5z" fill="#222"/></svg><div class="hthumb"><span></span></div><svg width="8" height="10"><path d="M2 1v8l4-4z" fill="#222"/></svg></div>
    <div class="readout">
      <div class="cursors">
        <span>T1</span><button class="btn" aria-label="T1 влево"><svg width="12" height="12"><path d="M1 6l5-5v3.500h5v3H6V11z"/></svg></button><button class="btn" aria-label="T1 вправо"><svg width="12" height="12"><path d="M11 6L6 1v3.500H1v3h5V11z"/></svg></button>
        <span>T2</span><button class="btn" aria-label="T2 влево"><svg width="12" height="12"><path d="M1 6l5-5v3.500h5v3H6V11z"/></svg></button><button class="btn" aria-label="T2 вправо"><svg width="12" height="12"><path d="M11 6L6 1v3.500H1v3h5V11z"/></svg></button>
        <span class="diff">T2-T1</span>
      </div>
      <div class="values"><table><tr><th>Время</th><th>Канал_A</th><th>Канал_B</th></tr><tr><td>243.415 ms</td><td>300.000 mV</td><td>-1.932 V</td></tr><tr><td>243.415 ms</td><td>300.000 mV</td><td>-1.932 V</td></tr><tr><td>0.000 s</td><td>0.000 V</td><td>0.000 V</td></tr></table></div>
      <div class="acts"><button class="btn">Экран</button><button class="btn">Сохранить</button></div>
      <label class="ext">Внешняя<input type="radio" name="ext"></label>
    </div>
    <div class="groups">
      <fieldset><legend>Развертка</legend>
        <div class="line"><label for="tb">Шкала:</label><input id="tb" class="w140 focus" value="100 us/Div"><span class="spin"><button aria-label="Больше"><svg width="8" height="5"><path d="M0 5h8L4 0z" fill="#4a62b5"/></svg></button><button aria-label="Меньше"><svg width="8" height="5"><path d="M0 0h8L4 5z" fill="#4a62b5"/></svg></button></span></div>
        <div class="line"><label for="xo">задержка X</label><input id="xo" class="w138" value="0"></div>
        <div class="line btns b4"><button class="btn on">Y/T</button><button class="btn">Add</button><button class="btn">B/A</button><button class="btn">A/B</button></div>
      </fieldset>
      <fieldset><legend>Канал А</legend>
        <div class="line"><label for="as">Шкала</label><input id="as" class="w166" value="200 mV/Div"></div>
        <div class="line"><label for="ao">смещение Y</label><input id="ao" class="w138" value="0"></div>
        <div class="line btns b3"><button class="btn">AC</button><button class="btn">0</button><button class="btn on">DC</button><input type="radio" name="ca" aria-label="Клемма A" checked></div>
      </fieldset>
      <fieldset><legend>Канал B</legend>
        <div class="line"><label for="bs">Шкала</label><input id="bs" class="w166" value="5  V/Div"></div>
        <div class="line"><label for="bo">смещение Y</label><input id="bo" class="w138" value="0"></div>
        <div class="line btns bb"><button class="btn">AC</button><button class="btn">0</button><button class="btn on">DC</button><button class="btn">-</button><input type="radio" name="cb" aria-label="Клемма B" checked></div>
      </fieldset>
      <fieldset class="sync"><legend>Синхронизация</legend>
        <div class="line trig"><span>Запуск</span><button class="btn on" aria-label="По фронту"><svg width="12" height="12"><path d="M2 10.500h4v-9h4M3 6l3-3 3 3" fill="none" stroke="#000"/></svg></button><button class="btn" aria-label="По спаду"><svg width="12" height="12"><path d="M2 1.500h4v9h4M3 6l3 3 3-3" fill="none" stroke="#000"/></svg></button><button class="btn on src">A</button><button class="btn">B</button><button class="btn ex">Внеш</button></div>
        <div class="line lev"><label for="lv">Уровень</label><input id="lv" value="0"><input class="unit" aria-label="Единица уровня" value="V"></div>
        <div class="line btns b5"><button class="btn">Одн.</button><button class="btn">Норм</button><button class="btn on">Авто</button><button class="btn">Нет</button></div>
      </fieldset>
    </div>
  </div>
</section>
</body>
</html>
```
FILE: styles.css
```css
* { box-sizing: border-box; }
body {
  margin: 0;
  min-height: 100vh;
  display: flex;
  flex-direction: column;
  position: relative;
  background: #f0f0f0;
  color: #000;
  font: 14px/18px "Open Sans", "Noto Sans", sans-serif;
  overflow-x: hidden;
}
h1, h2, p, ul { margin: 0; padding: 0; font-weight: 400; font-size: 14px; }
button { font: inherit; color: inherit; padding: 0; display: flex; align-items: center; justify-content: center; white-space: nowrap; }
svg { flex: none; display: block; }
.defs { position: absolute; width: 0; height: 0; }
.ic { width: 16px; height: 16px; }
.ic18 { width: 18px; height: 18px; }
.ic20 { width: 20px; height: 20px; }
.g { fill: none; stroke: #999; }
.flip { transform: scaleX(-1); }

/* Application frame */
.titlebar { height: 30px; display: flex; align-items: center; gap: 8px; padding: 0 2px; border-top: 1px solid #444; border-bottom: 1px solid #999; background: linear-gradient(#c0cbdb, #d8e5f2); }
.titlebar h1 { color: #4a5560; flex: 1; }
.winbtns { display: flex; gap: 3px; align-self: flex-start; padding-top: 1px; }
.winbtns button { width: 42px; height: 25px; border: 1px solid #8892ae; border-radius: 3px; background: linear-gradient(#c8d3e3, #c5d2e4); box-shadow: inset 0 0 0 1px #d8e2ee; }
.menubar { height: 33px; display: flex; align-items: center; gap: 14px; padding: 0 3px 4px 4px; border-top: 1px solid #fff; border-bottom: 1px solid #999; }
.menubar .ic20 { margin-right: -6px; }
.menubar a { color: #000; text-decoration: none; }
.menubar u { text-underline-offset: 2px; }
.mdi { margin-left: auto; display: flex; gap: 2px; align-self: flex-end; }
.mdi button, .mini, .cas { width: 19px; height: 19px; background: #f0f0f0; border: 1px solid; border-color: #fff #777 #777 #fff; box-shadow: 1px 1px 0 #999; }
.bar { display: flex; height: 31px; border-bottom: 1px solid #999; box-shadow: inset 0 1px 0 #fff; }
.bar-parts { height: 32px; border-bottom: 2px solid #999; }
.tools { display: flex; align-items: center; gap: 6px; padding-left: 14px; }
.tools i { width: 2px; height: 24px; margin: 0 -1px; border-left: 1px solid #999; border-right: 1px solid #fff; }
.std { width: 280px; gap: 6px; border-right: 1px solid #999; }
.std i { margin: 0 1px 0 -1px; }
.mid { width: 484px; margin-left: 183px; border-right: 1px solid #999; background: linear-gradient(#777, #777) 209px 3px / 131px 1px no-repeat; }
.sim, .zoom { margin-left: auto; padding: 0 4px 0 0; gap: 4px; }
.zoom { padding-right: 5px; }

/* Work area */
.work { flex: 1; display: flex; min-height: 600px; }
.dev { width: 198px; flex: none; display: flex; flex-direction: column; padding: 3px 10px 0 3px; border-right: 1px solid #777; }
.dev-head { display: flex; align-items: center; gap: 3px; height: 25px; margin-bottom: 4px; }
.dev-head h2 { flex: 1; height: 24px; line-height: 21px; padding-left: 4px; color: #4a5560; background: linear-gradient(90deg, #c0cddb, #d8e5f2); white-space: nowrap; }
.mini { width: 13px; height: 13px; }
.dev-box { flex: 1; display: flex; flex-direction: column; border: 1px solid #777; border-right-width: 2px; border-top-color: #999; padding: 0 1px 2px 0; }
.dev-tools { height: 25px; display: flex; align-items: center; gap: 10px; padding: 0 3px 0 5px; }
.dev-tools .last { margin-left: auto; }
.tree { flex: 1; list-style: none; background: #fff; border: 1px solid #778; padding: 1px 0 0 8px; }
.tree li { display: flex; align-items: center; height: 18px; }
.exp { width: 11px; height: 11px; border: 1px solid #999; background: linear-gradient(#35579b, #35579b) center / 7px 1px no-repeat, #fff; margin-right: 7px; }
.st { width: 14px; height: 16px; margin-right: 5px; }
.kid .ic { margin-right: 5px; }
.stem { width: 1px; height: 18px; margin-left: 5px; border-left: 1px dotted #888; }
.end .stem { visibility: hidden; }
.elbow { width: 10px; height: 18px; margin-left: 19px; background: linear-gradient(90deg, #888 50%, transparent 0) 0 9px / 2px 1px repeat-x; position: relative; }
.tree b { font-weight: 400; background: #eee; padding: 0 2px 0 1px; }
.dev-tabs { height: 31px; display: flex; align-items: flex-start; padding: 3px 0 0 1px; font: 12px/14px "DejaVu Sans Condensed", "DejaVu Sans", sans-serif; }
.dev-tabs button { height: 20px; width: 74px; background: #f0f0f0; border: 1px solid #777; border-left: 0; overflow: hidden; }
.dev-tabs .on { height: 24px; border-top: 0; }
.dev-tabs .arr { width: 18px; border: 1px solid #aaa; }

.doc { flex: 1; min-width: 0; display: flex; flex-direction: column; padding: 2px 6px 0 5px; border-top: 1px solid #777; border-right: 2px solid #777; }
.sheetrow { flex: 1; display: flex; }
.sheet { flex: 1; display: grid; grid-template: 25px 1fr / 25px 1fr; border: 3px solid #808080; border-width: 3px 0 1px 3px; background: conic-gradient(from 270deg at 1px 1px, #000 90deg, transparent 0) 7px 7px / 9px 9px #fff; color: #999; font-size: 12px; }
.corner, .rows { border-right: 3px solid #808080; }
.corner, .cols { border-bottom: 3px solid #808080; }
.cols span { display: block; width: 119px; height: 22px; padding-right: 4px; text-align: center; border-right: 1px solid #808080; line-height: 20px; }
.rows { display: flex; flex-direction: column; }
.rows span { height: 120px; line-height: 116px; text-align: center; border-bottom: 1px solid #808080; }
.field { overflow: hidden; padding: 181px 0 0 162px; }
.vscroll { width: 16px; display: flex; flex-direction: column; align-items: center; background: #efefef; padding: 8px 0; }
.vthumb { height: 406px; width: 15px; margin: 7px 0 auto; border: 1px solid #999; background: linear-gradient(90deg, #eee, #ccc); display: flex; align-items: center; justify-content: center; }
.vthumb span { width: 8px; height: 10px; background: repeating-linear-gradient(#555 0 1px, transparent 1px 4px); }
.doctabs { height: 38px; display: flex; gap: 2px; padding: 7px 0 7px 0; }
.doctabs button { background: #f0f0f0; border: 0; border-right: 2px solid #222; border-bottom: 1px solid #222; border-top: 1px solid #777; gap: 4px; padding: 0 3px 0 2px; }
.doctabs .cas { margin-left: auto; width: 15px; height: 16px; padding: 0; align-self: center; border: 1px solid #999; }
.instr { width: 26px; flex: none; display: flex; flex-direction: column; align-items: center; gap: 5px; padding-top: 15px; border-right: 1px solid #999; }
.instr i { width: 22px; height: 2px; border-top: 1px solid #999; border-bottom: 1px solid #fff; margin: 1px 0; }
.tri { width: 5px; height: 6px; }

/* Information block */
.info { height: 182px; display: flex; border-top: 1px solid #777; padding: 2px 5px 0 2px; }
.info-side { width: 30px; display: flex; flex-direction: column; align-items: center; gap: 3px; padding-right: 7px; }
.info-side h2 { writing-mode: vertical-rl; transform: rotate(180deg); flex: 1; width: 23px; line-height: 20px; padding-top: 3px; color: #4a5560; background: linear-gradient(#c0cddb, #d8e5f2); white-space: nowrap; margin-bottom: 5px; align-self: flex-start; }
.info-main { flex: 1; min-width: 0; padding-top: 4px; }
.log { height: 144px; background: #fff; border: 1px solid #778; border-right: 2px solid #888; padding: 3px 8px; white-space: nowrap; }
.log p { max-width: 360px; overflow: hidden; line-height: 24px; }
.info-tabs { display: flex; gap: 2px; border-top: 1px solid #777; font: 12px/14px "DejaVu Sans Condensed", "DejaVu Sans", sans-serif; }
.info-tabs button { height: 23px; padding: 0 6px; background: #f0f0f0; border: 1px solid #777; border-width: 0 2px 2px 0; box-shadow: -1px 0 #fff; }
.info-tabs .on { height: 26px; }

.status { height: 23px; display: flex; align-items: center; border-top: 1px solid #999; background: linear-gradient(#f0f0f0 1px, #999 1px 2px, #f1edec 2px); }
.status span { padding: 2px 0 0 4px; }
.s-dash { margin-left: auto; width: 80px; }
.s-sim { width: 238px; border-left: 1px solid #ddd; }
.s-time { width: 239px; border-left: 1px solid #ddd; }
.s-run { display: flex; gap: 1px; width: 64px; }
.s-run b { width: 7px; height: 12px; background: #0e0; border: 1px solid #2a6a2a; border-width: 1px 0 0 1px; }

.taskbar { height: 48px; flex: none; display: flex; align-items: center; padding-left: 1px; border-top: 1px solid #334; background: linear-gradient(90deg, #8093aa 70px, #a6c0dd 120px, #a6c0dd 1400px, #7f91a8 1450px); box-shadow: inset 0 1px #c9d9ea; gap: 2px; }
.taskbar button { height: 47px; width: 68px; background: none; border: 0; }
.taskbar button.task { border: 1px solid #445670; border-radius: 3px; background: linear-gradient(135deg, #dde8f4, #a9c3df 60%); box-shadow: inset 0 0 0 1px #dbe7f3; }
.taskbar button.cur { background: linear-gradient(#f3f7fb, #d5e2f0); }
.tray { margin-left: auto; display: flex; align-items: center; color: #fff; align-self: stretch; gap: 12px; }
.lang { font-size: 13px; margin-right: 9px; padding-bottom: 3px; }
.tray time { text-align: center; line-height: 22px; margin: 0 3px 0 7px; }
.peek { width: 12px; align-self: stretch; border: 1px solid #445670; background: linear-gradient(135deg, #a9b8ca, #667890); }

/* Instrument windows float over the workspace */
.btn { border: 1px solid #707070; border-radius: 3px; background: linear-gradient(#f2f2f2, #ebebeb 50%, #dddddd 50%, #cfcfcf); box-shadow: inset 0 0 0 1px #f8f8f8; height: 22px; }
.btn.on { border-color: #2c628b; background: linear-gradient(#e5f4fc, #c4e5f6 50%, #98d1ef 50%, #68b3db); box-shadow: inset 0 1px 1px #6f9db8; }
.win { position: absolute; font: 12px/16px "DejaVu Sans Condensed", "DejaVu Sans", sans-serif; border: 1px solid #333; border-radius: 7px 7px 0 0; }
.win h2 { font: 14px/20px "Open Sans", "Noto Sans", sans-serif; white-space: nowrap; }
.win fieldset { margin: 0; min-width: 0; border: 1px solid #d0dbe6; border-radius: 3px; padding: 0; box-shadow: inset 0 0 0 1px #fafafa; }
.win legend { margin-left: 6px; padding: 0 2px; line-height: 16px; }
input { font: inherit; color: inherit; height: 24px; min-width: 0; padding: 0 5px 2px; background: #fff; border: 1px solid; border-color: #abadb3 #e2e3ea #e3e9ef; }
input[type="radio"] { appearance: none; margin: 0; padding: 0; width: 16px; height: 16px; border: 1px solid #aaa; border-radius: 50%; background: radial-gradient(#eee 4px, #fff 5px); flex: none; }
input[type="radio"]:checked { background: radial-gradient(#bbb 2px, #999 4px, #fff 5px); }

.gen { left: 193px; top: 440px; width: 420px; background: linear-gradient(#c0cddb, #d8e5f2 38px); padding: 0 7px 8px; overflow: hidden; }
.gen h2 { color: #4a5560; padding: 13px 4px 4px; }
.gen-body { background: #f0f0f0; height: 254px; padding: 3px 4px 0; }
.gen .wave { display: flex; gap: 3px; padding: 4px 0 0 11px; border-bottom: 0; height: 44px; }
.gen legend { margin-left: -6px; }
.wave .btn { width: 74px; height: 20px; }
.gen .params { display: grid; grid-template-columns: 94px 85px 90px; column-gap: 0; align-items: center; align-content: start; padding: 4px 0 0 12px; height: 156px; border-radius: 3px; }
.params .btn { grid-column: 1 / 4; width: 149px; height: 27px; margin: 6px 0 0 34px; }
.terms { display: flex; gap: 58px; padding: 6px 0 0 18px; }
.terms label { display: flex; flex-direction: column; align-items: center; gap: 3px; }
.terms label:first-child { padding-top: 3px; gap: 0; }

.scope { left: 403px; right: 48px; top: 67px; padding: 0 7px 8px 8px; border: 1px solid #111; border-width: 1px 2px 2px 1px; background: linear-gradient(#9ab4d1, #b9cfea 40px); box-shadow: inset -1px -1px #1cc8e0, inset 1px 1px #fff; }
.scope-title { height: 37px; display: flex; align-items: center; padding: 7px 2px 0 4px; }
.scope-title h2 { flex: 1; }
.scope-title button { width: 42px; height: 24px; border: 1px solid #43141d; border-radius: 3px; background: linear-gradient(#e9aba3, #d68075 45%, #b83a2b 50%, #d1705a); box-shadow: inset 0 0 0 1px #e7b0a8; margin-bottom: 1px; }
.scope-body { background: #f0f0f0; padding-bottom: 1px; }
.screen { border: 3px solid #888; border-color: #777 #fff #fff #777; background: #000; }
.screen svg { width: 100%; height: auto; }
.hscroll { height: 16px; margin-bottom: 5px; display: flex; align-items: center; padding: 1px 6px 0 6px; background: #ececec; }
.hthumb { margin-left: auto; margin-right: 8px; width: 163px; height: 14px; border: 1px solid #999; border-radius: 2px; background: linear-gradient(#f2f2f2, #e4e4e4 50%, #d2d2d2 50%, #ccc); display: flex; align-items: center; justify-content: center; }
.hthumb span { width: 10px; height: 8px; background: repeating-linear-gradient(90deg, #555 0 1px, transparent 1px 4px); }
.readout { display: flex; height: 73px; }
.cursors { width: 70px; margin-right: 1px; border: 1px solid #aaa; display: grid; grid-template: 20px 20px 20px / 20px 16px 16px; gap: 1px 4px; padding: 7px 0 0 5px; align-items: center; }
.cursors .btn { height: 19px; }
.diff { grid-column: 1 / 4; }
.values { flex: 1; background: #fff; border: 1px solid #e3e3e3; border-top: 2px solid #777; border-left: 2px solid #777; }
table { border-collapse: collapse; }
th, td { font-weight: 400; padding: 0; text-align: center; line-height: 16px; width: 115px; }
td:first-child, th:first-child { width: 80px; }
td:last-child, th:last-child { width: 72px; }
.acts { width: 80px; padding: 9px 0 0 9px; display: flex; flex-direction: column; gap: 8px; }
.acts .btn { height: 26px; }
.ext { display: flex; gap: 5px; align-self: flex-end; margin: 0 21px -5px 12px; align-items: center; }
.groups { display: grid; grid-template-columns: 288fr 284fr 289fr 347fr; gap: 1px; padding-top: 9px; }
.win .groups fieldset { height: 97px; padding: 0 4px 0 3px; display: flex; flex-direction: column; gap: 2px; }
.win .groups legend { margin-left: 3px; }
.line { display: flex; align-items: center; gap: 2px; }
.line label { flex: 1; white-space: nowrap; }
.w140 { width: 140px; }
.w138 { width: 138px; }
.w166 { width: 166px; }
.focus { border-color: #3d7bad #b7d9ed #b7d9ed #a4c9e3; background: linear-gradient(#000, #000) 5px 4px / 1px 15px no-repeat, #fff; }
.spin { width: 20px; display: flex; flex-direction: column; }
.spin button { height: 12px; border: 1px solid #aaa; background: #f4f4f4; }
.btns { padding-top: 2px; }
.b4 { padding-left: 5px; padding-right: 5px; }
.b4 .btn { flex: 1; }
.b3 .btn { width: 63px; }
.b3 input, .bb input { margin-left: auto; margin-right: 3px; }
.line.bb { padding: 3px 0 0 2px; }
.bb .btn { width: 54px; }
.trig { padding-top: 4px; }
.trig span { width: 66px; }
.trig .btn { width: 46px; }
.trig .src { margin-left: 4px; }
.trig .ex { width: 65px; }
.lev { gap: 0; padding-right: 10px; }
.win .lev label { flex: none; width: 68px; }
.lev input { flex: 1; }
.lev .unit { flex: none; width: 39px; text-align: center; }
.b5 { padding: 0 6px 0 0; }
.b5 .btn { flex: 1; }
```
